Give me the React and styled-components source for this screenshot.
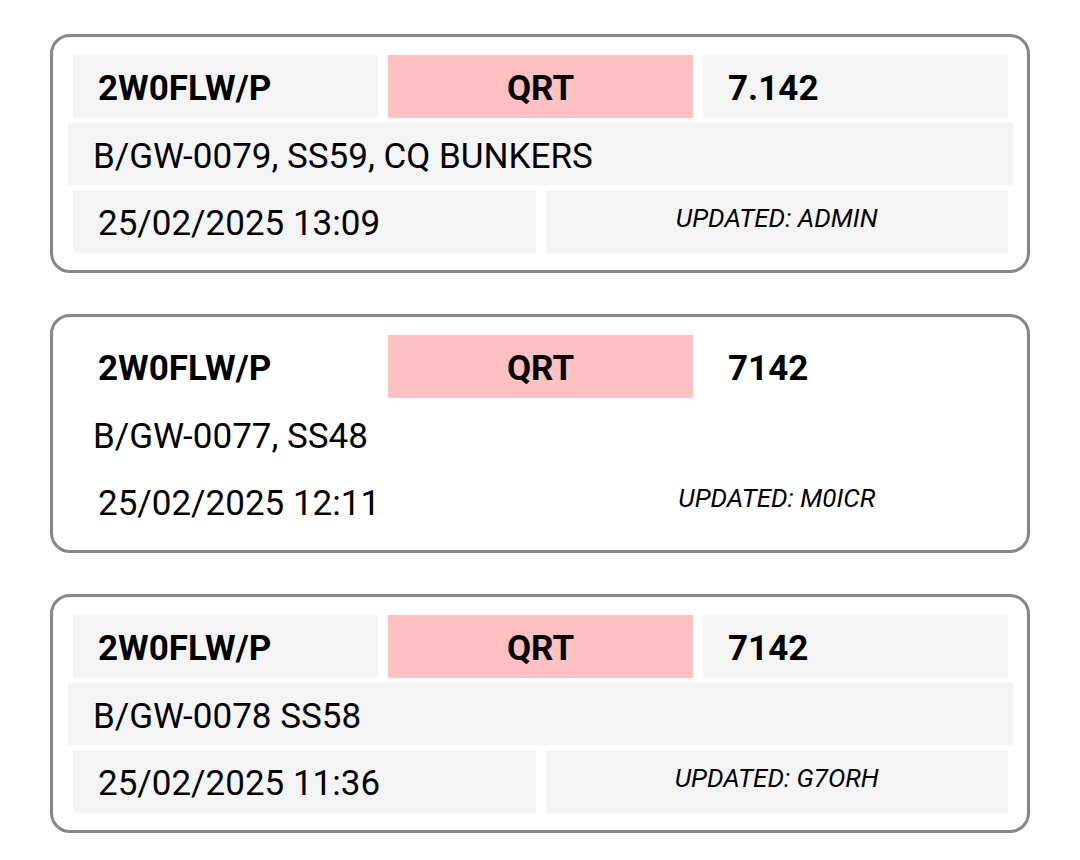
import React from 'react'
import styled, {createGlobalStyle} from "styled-components";

const spots = [
    {call: '2W0FLW/P', status: 'QRT', freq: '7.142', ref: 'B/GW-0079, SS59, CQ BUNKERS', time: '25/02/2025 13:09', by: 'ADMIN', shaded: true},
    {call: '2W0FLW/P', status: 'QRT', freq: '7142', ref: 'B/GW-0077, SS48', time: '25/02/2025 12:11', by: 'M0ICR', shaded: false},
    {call: '2W0FLW/P', status: 'QRT', freq: '7142', ref: 'B/GW-0078 SS58', time: '25/02/2025 11:36', by: 'G7ORH', shaded: true},
]

function App() {
    return (
        <>
            <GlobalStyle />
            <StyledList>
                {spots.map((spot, index) => <SpotCard key={index} spot={spot} />)}
            </StyledList>
        </>
    )
}

function SpotCard({spot}) {
    const shaded = spot.shaded
    return (
        <StyledCard>
            <TopRow>
                <Cell $bold $shaded={shaded}>{spot.call}</Cell>
                <Cell $bold $center $tone="#ffc1c1">{spot.status}</Cell>
                <Cell $bold $shaded={shaded}>{spot.freq}</Cell>
            </TopRow>
            <RefRow $shaded={shaded}>{spot.ref}</RefRow>
            <BottomRow>
                <Cell $shaded={shaded}>{spot.time}</Cell>
                <Updated $shaded={shaded}>UPDATED: {spot.by}</Updated>
            </BottomRow>
        </StyledCard>
    )
}

const GlobalStyle = createGlobalStyle`
  body {
    margin: 0;
    background: #fff;
    font-family: Roboto, "Noto Sans", sans-serif;
    color: #000;
  }
`

const StyledList = styled.div`
  display: flex;
  flex-direction: column;
  gap: 41px;
  padding: 34px 50px;
`

const StyledCard = styled.div`
  width: 980px;
  box-sizing: border-box;
  border: 3px solid #878787;
  border-radius: 20px;
  padding: 18px 14px 17px 15px;
  display: flex;
  flex-direction: column;
  gap: 5px;
`

const TopRow = styled.div`
  display: grid;
  grid-template-columns: repeat(3, 1fr);
  gap: 10px;
  margin: 0 5px;
`

const BottomRow = styled.div`
  display: grid;
  grid-template-columns: 1fr 1fr;
  gap: 10px;
  margin: 0 5px;
`

const Cell = styled.div`
  height: 63px;
  display: flex;
  align-items: center;
  justify-content: ${p => p.$center ? 'center' : 'flex-start'};
  padding: 4px 25px 0;
  box-sizing: border-box;
  font-size: 35px;
  font-weight: ${p => p.$bold ? 700 : 400};
  background: ${p => p.$tone || (p.$shaded ? '#f4f4f4' : 'transparent')};
  white-space: nowrap;
`

const RefRow = styled.div`
  height: 62px;
  display: flex;
  align-items: center;
  padding: 4px 25px 0;
  box-sizing: border-box;
  font-size: 35px;
  background: ${p => p.$shaded ? '#f4f4f4' : 'transparent'};
`

const Updated = styled.div`
  height: 63px;
  display: flex;
  align-items: center;
  justify-content: center;
  padding-bottom: 8px;
  box-sizing: border-box;
  font-size: 26px;
  font-style: italic;
  background: ${p => p.$shaded ? '#f4f4f4' : 'transparent'};
`

export default App
